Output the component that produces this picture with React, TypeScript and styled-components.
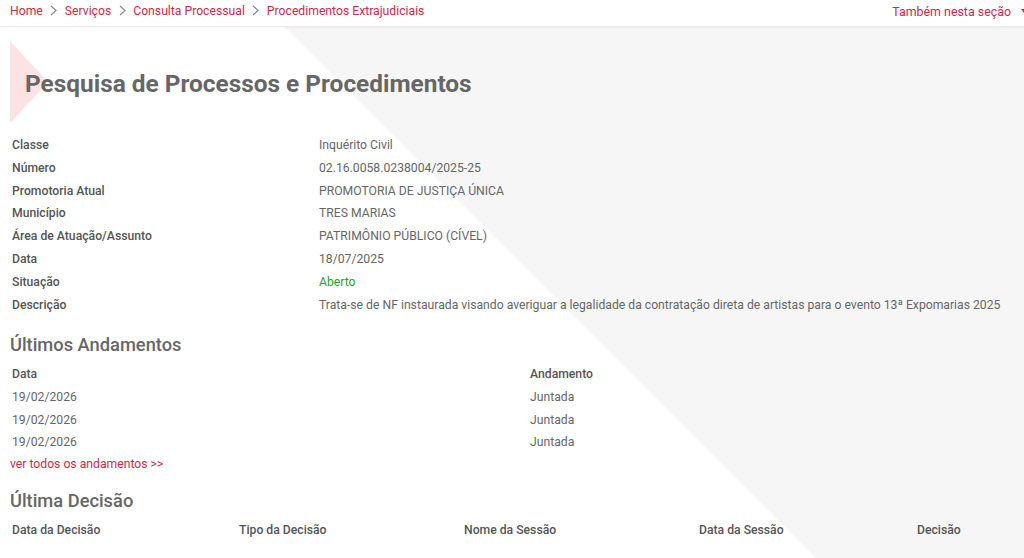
import React from "react";
import styled, { createGlobalStyle } from "styled-components";

const GlobalStyle = createGlobalStyle`
    html, body {
        margin: 0;
        padding: 0;
        background: #fff;
        font-family: Roboto, "Liberation Sans", Arial, sans-serif;
        color: #666;
    }
    * {
        box-sizing: border-box;
    }
`;

const crimson = "#d0284c";

const Header = styled.header`
    height: 27px;
    display: flex;
    align-items: center;
    justify-content: space-between;
    padding: 0 0 0 10px;
    border-bottom: 1px solid #ececec;
    box-shadow: 0 1px 2px rgba(0, 0, 0, 0.04);
    font-size: 12.2px;
    position: relative;
    z-index: 2;
    background: #fff;
    overflow: hidden;
`;

const Crumbs = styled.nav`
    display: flex;
    align-items: center;
    gap: 5.5px;
    padding-bottom: 5px;

    a {
        color: ${crimson};
        text-decoration: none;
    }
`;

const Sep = styled.span`
    color: #888;
    display: flex;
    align-items: center;
    padding: 0 1px;
`;

const SectionMenu = styled.div`
    display: flex;
    align-items: center;
    gap: 10px;
    color: ${crimson};
    font-size: 12.4px;
    margin-right: -6px;
    padding-bottom: 3px;
`;

const Main = styled.main`
    position: relative;
    overflow: hidden;
    padding: 0 10px 40px 10px;
    min-height: 531px;
`;

const GrayShape = styled.div`
    position: absolute;
    left: 285px;
    top: 0;
    width: 2000px;
    height: 2000px;
    background: #f6f6f6;
    clip-path: polygon(0 0, 100% 0, 100% 100%);
    z-index: 0;
`;

const PinkShape = styled.div`
    position: absolute;
    left: 10px;
    top: 14px;
    width: 38px;
    height: 82px;
    background: #fde2e4;
    clip-path: polygon(0 0, 100% 50%, 0 100%);
    z-index: 0;
`;

const Content = styled.div`
    position: relative;
    z-index: 1;
`;

const Title = styled.h1`
    margin: 0;
    padding: 42px 0 0 15px;
    height: 107px;
    font-size: 24.4px;
    font-weight: 700;
    color: #666;
`;

const InfoGrid = styled.div`
    display: grid;
    grid-template-columns: 307px 1fr;
    padding-left: 2px;
    font-size: 12.2px;
    line-height: 22.8px;
`;

const Label = styled.div`
    font-weight: 500;
    color: #555;
`;

const Value = styled.div<{ $status?: boolean }>`
    color: ${p => (p.$status ? "#1fa51f" : "#666")};
`;

const SectionTitle = styled.h2`
    margin: 0;
    font-size: 18.3px;
    font-weight: 500;
    color: #666;
    line-height: 26px;
`;

const Table = styled.div<{ $cols: string; $gap: number }>`
    display: grid;
    grid-template-columns: ${p => p.$cols};
    margin-top: ${p => p.$gap}px;
    padding-left: 2px;
    font-size: 12.2px;
    line-height: 22.7px;
`;

const Th = styled.div`
    font-weight: 500;
    color: #555;
`;

const Td = styled.div`
    color: #666;
`;

const MoreLink = styled.a`
    display: block;
    color: ${crimson};
    font-size: 12.2px;
    line-height: 20px;
    text-decoration: none;
`;

const Andamentos = styled.section`
    margin-top: 16px;
`;

const Decisao = styled.section`
    margin-top: 14px;
`;

const Chevron = () => (
    <svg width="9" height="11" viewBox="0 0 9 11" fill="none">
        <path d="M2 1l5 4.5L2 10" stroke="currentColor" strokeWidth="1.2" />
    </svg>
);

const Caret = () => (
    <svg width="9" height="6" viewBox="0 0 9 6">
        <path d="M0 0h9L4.5 6z" fill="currentColor" />
    </svg>
);

const info: [string, string][] = [
    ["Classe", "Inquérito Civil"],
    ["Número", "02.16.0058.0238004/2025-25"],
    ["Promotoria Atual", "PROMOTORIA DE JUSTIÇA ÚNICA"],
    ["Município", "TRES MARIAS"],
    ["Área de Atuação/Assunto", "PATRIMÔNIO PÚBLICO (CÍVEL)"],
    ["Data", "18/07/2025"],
    ["Situação", "Aberto"],
    ["Descrição", "Trata-se de NF instaurada visando averiguar a legalidade da contratação direta de artistas para o evento 13ª Expomarias 2025"],
];

const andamentos = [
    ["19/02/2026", "Juntada"],
    ["19/02/2026", "Juntada"],
    ["19/02/2026", "Juntada"],
];

const crumbs = ["Home", "Serviços", "Consulta Processual", "Procedimentos Extrajudiciais"];

export default function App() {
    return (
        <>
            <GlobalStyle />
            <Header>
                <Crumbs>
                    {crumbs.map((c, i) => (
                        <React.Fragment key={c}>
                            {i > 0 && (
                                <Sep>
                                    <Chevron />
                                </Sep>
                            )}
                            <a href="#">{c}</a>
                        </React.Fragment>
                    ))}
                </Crumbs>
                <SectionMenu>
                    Também nesta seção
                    <Caret />
                </SectionMenu>
            </Header>
            <Main>
                <GrayShape />
                <PinkShape />
                <Content>
                    <Title>Pesquisa de Processos e Procedimentos</Title>
                    <InfoGrid>
                        {info.map(([k, v]) => (
                            <React.Fragment key={k}>
                                <Label>{k}</Label>
                                <Value $status={k === "Situação"}>{v}</Value>
                            </React.Fragment>
                        ))}
                    </InfoGrid>
                    <Andamentos>
                        <SectionTitle>Últimos Andamentos</SectionTitle>
                        <Table $cols="518px 1fr" $gap={5}>
                            <Th>Data</Th>
                            <Th>Andamento</Th>
                            {andamentos.map(([d, a], i) => (
                                <React.Fragment key={i}>
                                    <Td>{d}</Td>
                                    <Td>{a}</Td>
                                </React.Fragment>
                            ))}
                        </Table>
                        <MoreLink href="#">ver todos os andamentos &gt;&gt;</MoreLink>
                    </Andamentos>
                    <Decisao>
                        <SectionTitle>Última Decisão</SectionTitle>
                        <Table $cols="227px 225px 235px 218px 1fr" $gap={5}>
                            <Th>Data da Decisão</Th>
                            <Th>Tipo da Decisão</Th>
                            <Th>Nome da Sessão</Th>
                            <Th>Data da Sessão</Th>
                            <Th>Decisão</Th>
                        </Table>
                    </Decisao>
                </Content>
            </Main>
        </>
    );
}
